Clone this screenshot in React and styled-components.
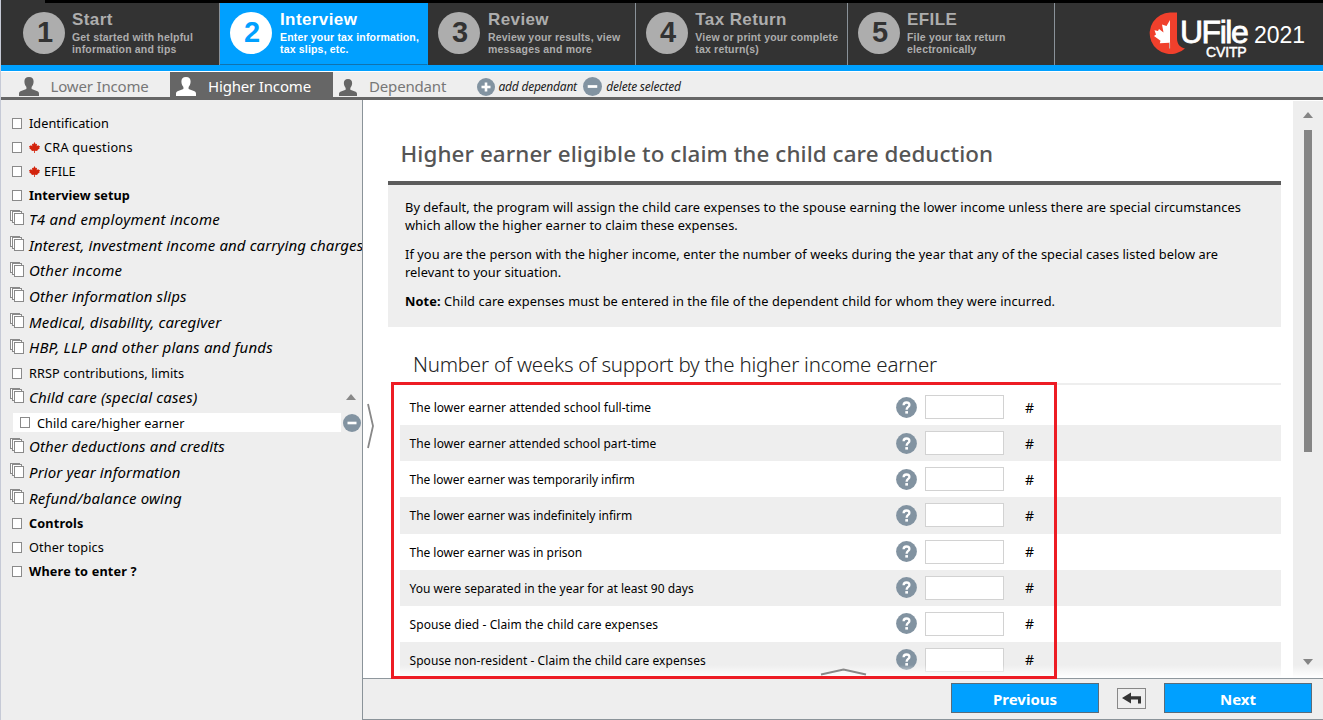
import React from "react";
import styled, { createGlobalStyle, css } from "styled-components";

const sans = `"Noto Sans", "Open Sans", "Liberation Sans", sans-serif`;
const arial = `"Liberation Sans", Arial, sans-serif`;

const Global = createGlobalStyle`
  *, *::before, *::after { box-sizing: border-box; }
  body { margin: 0; background: #fff; font-family: ${sans}; color: #000; overflow: hidden; }
  button, input { font: inherit; }
  p, h1, h2 { margin: 0; }
`;

const Page = styled.div`
  position: relative;
  display: flex;
  flex-direction: column;
  width: 1323px;
  height: 720px;
  overflow: hidden;
  border-left: 1px solid #c6cad6;
`;

/* ---------- header ---------- */

const TopStrip = styled.div`
  flex: none;
  height: 3px;
  background: linear-gradient(to right, #333 44px, #000 44px);
`;

const Header = styled.header`
  flex: none;
  display: flex;
  height: 68px;
  background: #333;
  border-bottom: 6px solid #00a0ff;
`;

const Step = styled.div`
  display: flex;
  width: ${(p) => p.$w}px;
  padding: 9px 0 0 ${(p) => p.$pad}px;
  gap: ${(p) => p.$gap}px;
  white-space: nowrap;
  font-family: ${arial};
  font-weight: 700;
  color: ${(p) => (p.$active ? "#fff" : "#adadad")};
  border-right: 1px solid ${(p) => (p.$active ? "#00a0ff" : "#8a9299")};
  ${(p) => p.$active && css`background: #00a0ff; border-bottom: 1px solid #1173ae;`}
`;

const StepNumber = styled.div`
  flex: none;
  width: 42px;
  height: 42px;
  padding-left: 2px;
  border-radius: 50%;
  background: ${(p) => (p.$active ? "#fff" : "#adadad")};
  color: ${(p) => (p.$active ? "#00a0ff" : "#333")};
  font-size: 29px;
  line-height: 40px;
  text-align: center;
`;

const StepTitle = styled.div`
  font-size: 17px;
  line-height: 18px;
  margin-top: -1px;
  letter-spacing: 0.4px;
`;

const StepText = styled.div`
  margin-top: 2px;
  font-size: 10.5px;
  line-height: 12px;
  letter-spacing: 0.18px;
`;

const Brand = styled.div`
  display: flex;
  margin-left: 94px;
  padding-top: 9px;
  color: #fff;
  font-family: ${arial};
`;

const BrandName = styled.div`
  width: 75px;
  margin-left: -6px;
  padding-top: 4px;
  font-size: 32px;
  line-height: 32px;
  letter-spacing: -1.5px;
  -webkit-text-stroke: 0.8px #fff;
`;

const BrandSub = styled.div`
  margin: -3px 0 0 26px;
  font-size: 14px;
  line-height: 14px;
  letter-spacing: -0.15px;
  -webkit-text-stroke: 0.5px #fff;
`;

const BrandYear = styled.div`
  margin-left: -1px;
  padding-top: 10px;
  font-size: 23px;
  line-height: 26px;
`;

/* ---------- people tabs ---------- */

const TabBar = styled.nav`
  flex: none;
  display: flex;
  height: 29px;
  background: #eee;
  border-top: 1px solid #fff;
  border-bottom: 3px solid #666;
  white-space: nowrap;
`;

const Tab = styled.div`
  display: flex;
  align-items: center;
  width: ${(p) => p.$w}px;
  padding: 4px 0 1px ${(p) => p.$pad}px;
  gap: ${(p) => p.$gap}px;
  font-size: 15px;
  line-height: 22px;
  letter-spacing: -0.17px;
  color: ${(p) => (p.$active ? "#fff" : "#777")};
  background: ${(p) => (p.$active ? "#666" : "transparent")};
  svg { flex: none; align-self: flex-end; fill: ${(p) => (p.$active ? "#fff" : "#666")}; }
`;

const TabAction = styled.div`
  display: flex;
  align-items: center;
  gap: 4px;
  padding-top: 4px;
  margin-right: 6.5px;
  font-size: 12px;
  font-style: italic;
  letter-spacing: -0.23px;
  color: #222;
  svg { flex: none; }
`;

/* ---------- sidebar ---------- */

const Main = styled.div`
  flex: 1;
  display: flex;
  min-height: 0;
`;

const Sidebar = styled.aside`
  flex: none;
  width: 362px;
  padding-top: 11px;
  background: #eee;
  border-right: 1px solid #8a9399;
  overflow: hidden;
`;

const Item = styled.div`
  display: flex;
  align-items: center;
  height: ${(p) => (p.$group ? 25.7 : 24)}px;
  padding-left: ${(p) => (p.$group ? 9 : 11)}px;
  padding-bottom: ${(p) => (p.$group ? 2 : 0)}px;
  gap: ${(p) => (p.$group ? 5 : 7)}px;
  white-space: nowrap;
  font-size: ${(p) => (p.$group ? 15 : 12.7)}px;
  font-style: ${(p) => (p.$group ? "italic" : "normal")};
  font-weight: ${(p) => (p.$bold ? 700 : 400)};
  letter-spacing: ${(p) => p.$ls || 0}px;
  svg { flex: none; }
`;

const Box = styled.span`
  flex: none;
  width: 10px;
  height: 11px;
  border: 1px solid #8a8a8a;
  background: #fff;
`;

const ItemArrow = styled.span`
  margin-left: auto;
  margin-right: 6px;
  border: 5px solid transparent;
  border-top: 0;
  border-bottom: 6px solid #888;
`;

const SubRow = styled.div`
  display: flex;
  align-items: center;
  height: 23.6px;
  padding-left: 12px;
  gap: 2px;
`;

const SubItem = styled.div`
  display: flex;
  align-items: center;
  width: 328px;
  height: 19px;
  padding-left: 7px;
  gap: 7px;
  background: #fff;
  font-size: 12.7px;
  letter-spacing: 0.07px;
  white-space: nowrap;
`;

/* ---------- content ---------- */

const Right = styled.section`
  flex: 1;
  display: flex;
  flex-direction: column;
  min-width: 0;
`;

const ScrollArea = styled.div`
  position: relative;
  flex: 1;
  display: flex;
  min-height: 0;
  padding-top: 1px;
  overflow: hidden;
`;

const Content = styled.div`
  width: 930px;
  padding: 34px 12px 0 25px;
`;

const Title = styled.h1`
  height: 46px;
  padding-left: 12.5px;
  font-size: 22.4px;
  font-weight: 500;
  line-height: 37px;
  letter-spacing: 0.08px;
  color: #555;
  white-space: nowrap;
`;

const Notice = styled.div`
  height: 146px;
  padding: 13px 16px 0 17px;
  border-top: 4px solid #5c5c5c;
  background: #eee;
  font-size: 12.8px;
  line-height: 18px;
  letter-spacing: 0.06px;
  white-space: nowrap;
  p + p { margin-top: 11px; }
`;

const Line = styled.span`
  display: block;
  letter-spacing: ${(p) => p.$ls || 0.06}px;
`;

const Section = styled.h2`
  height: 58px;
  margin-left: 12px;
  padding: 21px 0 0 13px;
  border-bottom: 2px solid #eee;
  font-size: 20.5px;
  font-weight: 300;
  line-height: 32px;
  letter-spacing: -0.23px;
  color: #222;
  white-space: nowrap;
`;

const Rows = styled.div`
  margin: 4px 0 0 12px;
`;

const Row = styled.div`
  display: flex;
  align-items: center;
  height: 36.14px;
  padding-left: 9.5px;
  font-size: 12px;
  background: ${(p) => (p.$shaded ? "#eee" : "#fff")};
  white-space: nowrap;
`;

const RowLabel = styled.label`
  width: 486.5px;
  padding-top: 1px;
  letter-spacing: ${(p) => p.$ls || 0}px;
`;

const Field = styled.input`
  width: 79px;
  height: 24px;
  margin: 0 21px 0 8px;
  padding: 0 4px;
  border: 1px solid #d2d2d2;
  border-radius: 0;
  background: #fff;
`;

const Unit = styled.span`
  font-size: 14px;
`;

const Track = styled.div`
  display: flex;
  flex-direction: column;
  align-items: center;
  width: 30px;
  padding-top: 11px;
  background: #eee;
`;

const Arrow = styled.span`
  width: 10px;
  height: 6px;
  background: #858585;
  clip-path: ${(p) => (p.$down ? "polygon(0 0, 100% 0, 50% 100%)" : "polygon(50% 0, 100% 100%, 0 100%)")};
`;

const Thumb = styled.div`
  width: 8px;
  height: 322px;
  margin: 12px 0 207px;
  background: #858585;
`;

const Fade = styled.div`
  position: absolute;
  inset: auto 0 0 0;
  height: 13px;
  background: linear-gradient(to bottom, rgba(255, 255, 255, 0), #fff);
`;

const Footer = styled.footer`
  flex: none;
  display: flex;
  justify-content: flex-end;
  height: 42px;
  padding: 4px 11px 0 0;
  border-top: 1px solid #8f979d;
  border-bottom: 1px solid #8a9399;
  background: #eee;
`;

const NavButton = styled.button`
  width: 148px;
  height: 30px;
  padding: 2px 0 0;
  border: 1px solid #5a6c7a;
  background: #00a0ff;
  color: #fff;
  font-size: 15px;
  font-weight: 700;
  line-height: 26px;
`;

const BackButton = styled.button`
  display: flex;
  width: 29px;
  height: 21px;
  margin: 5px 18px 0;
  padding: 0;
  border: 1px solid #888;
  background: #eee;
`;

/* ---------- overlays ---------- */

const Highlight = styled.div`
  position: absolute;
  left: 390px;
  top: 382px;
  width: 666px;
  height: 297px;
  border: 3px solid #ed1c24;
`;

const SideHandle = styled.svg`
  position: absolute;
  left: 364px;
  top: 402px;
`;

const BottomHandle = styled.svg`
  position: absolute;
  left: 818px;
  top: 667px;
`;

/* ---------- icons ---------- */

const Person = ({ w = 20, h = 19 }) => (
  <svg width={w} height={h} viewBox="0 0 20 19" preserveAspectRatio="none">
    <path d="M10 0C6.800 0 5.300 1.800 5.400 4.800C5.500 7.500 6.500 8.800 7.400 10V12L1.500 14.300C.4 14.800 0 15.600 0 16.800V19H20V16.800C20 15.600 19.600 14.800 18.500 14.300L12.600 12V10C13.500 8.800 14.500 7.500 14.600 4.800C14.700 1.800 13.200 0 10 0Z" />
  </svg>
);

const RoundIcon = ({ size, plus }) => (
  <svg width={size} height={size} viewBox="0 0 18 18">
    <circle cx="9" cy="9" r="9" fill="#8293a1" />
    <rect x="4.500" y="7.700" width="9" height="2.600" fill="#fff" />
    {plus && <rect x="7.700" y="4.500" width="2.600" height="9" fill="#fff" />}
  </svg>
);

const HelpIcon = () => (
  <svg width="21" height="21" viewBox="0 0 21 21">
    <circle cx="10.500" cy="10.500" r="10.400" fill="#8293a1" />
    <path d="M7.600 8.300C7.600 6.300 8.800 5.500 10.500 5.500C12.300 5.500 13.400 6.400 13.400 7.900C13.400 10 10.600 10 10.600 12.700" fill="none" stroke="#fff" strokeWidth="2.300" />
    <rect x="9.300" y="14.100" width="2.700" height="2.500" fill="#fff" />
  </svg>
);

const StackSvg = styled.svg`
  margin-bottom: 2px;
`;

const Stack = () => (
  <StackSvg width="14" height="15" viewBox="0 0 14 15">
    <g fill="#fff" stroke="#8a8a8a">
      <rect x=".5" y=".5" width="9" height="10" />
      <rect x="2.500" y="1.500" width="9" height="11" />
      <rect x="4.500" y="3.500" width="9" height="11" />
    </g>
  </StackSvg>
);

const LeafSvg = styled.svg`
  margin-right: -3px;
`;

const Leaf = () => (
  <LeafSvg width="11" height="11" viewBox="0 0 22 22">
    <path fill="#d3230c" d="M11 0L13.500 4.500L16 3.500L15.500 8.500L18.500 6L19.500 8L22 8L20.500 11.500L21.500 12.500L16.500 16.500L17 18L11.800 17.500V22H10.200V17.500L5 18L5.500 16.500L.5 12.500L1.500 11.500L0 8L2.500 8L3.500 6L6.500 8.500L6 3.500L8.500 4.500Z" />
  </LeafSvg>
);

const BrandMark = () => (
  <svg width="37" height="42" viewBox="0 0 37 42">
    <path fill="#f0402c" d="M28 0.500H21A21 20.800 0 1 0 36 36.500C31 35.500 28 32 28 26Z" />
    <path fill="#fff" d="M21 8L17.500 14L13 12.500L14.500 20.500L10 17L9 19L5.500 18.300L7 22.500L5 24L11.500 28.800L10.800 31.300L20.300 30.800V31.500H21Z" />
    <rect x="20.200" y="30.500" width="0.900" height="6" fill="#c9c9c9" />
  </svg>
);

/* ---------- data ---------- */

const steps = [
  { title: "Start", text: ["Get started with helpful", "information and tips"], w: 219, pad: 22, gap: 7 },
  { title: "Interview", text: ["Enter your tax information,", "tax slips, etc."], w: 208, pad: 10, gap: 8, active: true },
  { title: "Review", text: ["Review your results, view", "messages and more"], w: 208, pad: 10, gap: 8 },
  { title: "Tax Return", text: ["View or print your complete", "tax return(s)"], w: 212, pad: 10, gap: 7.3 },
  { title: "EFILE", text: ["File your tax return", "electronically"], w: 207, pad: 10, gap: 7 },
];

const items = [
  { label: "Identification", ls: 0.05 },
  { label: "CRA questions", leaf: true, ls: 0.24 },
  { label: "EFILE", leaf: true },
  { label: "Interview setup", bold: true, ls: 0.05 },
  { label: "T4 and employment income", group: true, ls: 0.28 },
  { label: "Interest, investment income and carrying charges", group: true, ls: 0.11 },
  { label: "Other income", group: true, ls: 0.25 },
  { label: "Other information slips", group: true, ls: 0.14 },
  { label: "Medical, disability, caregiver", group: true, ls: 0.14 },
  { label: "HBP, LLP and other plans and funds", group: true, ls: 0.21 },
  { label: "RRSP contributions, limits", ls: 0.1 },
  { label: "Child care (special cases)", group: true, ls: 0.16, child: "Child care/higher earner" },
  { label: "Other deductions and credits", group: true, ls: 0.13 },
  { label: "Prior year information", group: true, ls: 0.12 },
  { label: "Refund/balance owing", group: true, ls: 0.2 },
  { label: "Controls", bold: true, ls: 0.14 },
  { label: "Other topics", ls: 0.12 },
  { label: "Where to enter ?", bold: true, ls: 0.17 },
];

const rows = [
  { label: "The lower earner attended school full-time", ls: 0.04 },
  { label: "The lower earner attended school part-time", ls: 0.03 },
  { label: "The lower earner was temporarily infirm", ls: -0.04 },
  { label: "The lower earner was indefinitely infirm", ls: -0.03 },
  { label: "The lower earner was in prison", ls: -0.03 },
  { label: "You were separated in the year for at least 90 days", ls: 0.01 },
  { label: "Spouse died - Claim the child care expenses", ls: 0.08 },
  { label: "Spouse non-resident - Claim the child care expenses", ls: 0.07 },
];

export default function App() {
  return (
    <Page>
      <Global />
      <TopStrip />
      <Header>
        {steps.map((s, i) => (
          <Step key={s.title} $w={s.w} $pad={s.pad} $gap={s.gap} $active={s.active}>
            <StepNumber $active={s.active}>{i + 1}</StepNumber>
            <div>
              <StepTitle>{s.title}</StepTitle>
              <StepText>
                {s.text[0]}
                <br />
                {s.text[1]}
              </StepText>
            </div>
          </Step>
        ))}
        <Brand>
          <BrandMark />
          <BrandName>
            UFile
            <BrandSub>CVITP</BrandSub>
          </BrandName>
          <BrandYear>2021</BrandYear>
        </Brand>
      </Header>

      <TabBar>
        <Tab $w={169} $pad={18} $gap={11.5}><Person />Lower Income</Tab>
        <Tab $w={163} $pad={6} $gap={12} $active><Person />Higher Income</Tab>
        <Tab $w={143.500} $pad={6} $gap={12}><Person w={18} h={17} />Dependant</Tab>
        <TabAction><RoundIcon size={18} plus />add dependant</TabAction>
        <TabAction><RoundIcon size={19} />delete selected</TabAction>
      </TabBar>

      <Main>
        <Sidebar>
          {items.map((it) => (
            <React.Fragment key={it.label}>
              <Item $group={it.group} $bold={it.bold} $ls={it.ls}>
                {it.group ? <Stack /> : <Box />}
                {it.leaf && <Leaf />}
                {it.label}
                {it.child && <ItemArrow />}
              </Item>
              {it.child && (
                <SubRow>
                  <SubItem><Box />{it.child}</SubItem>
                  <RoundIcon size={18} />
                </SubRow>
              )}
            </React.Fragment>
          ))}
        </Sidebar>

        <Right>
          <ScrollArea>
            <Content>
              <Title>Higher earner eligible to claim the child care deduction</Title>
              <Notice>
                <p>
                  <Line>By default, the program will assign the child care expenses to the spouse earning the lower income unless there are special circumstances</Line>
                  <Line>which allow the higher earner to claim these expenses.</Line>
                </p>
                <p>
                  <Line $ls={0.07}>If you are the person with the higher income, enter the number of weeks during the year that any of the special cases listed below are</Line>
                  <Line>relevant to your situation.</Line>
                </p>
                <p>
                  <Line $ls={0.095}><b>Note:</b> Child care expenses must be entered in the file of the dependent child for whom they were incurred.</Line>
                </p>
              </Notice>
              <Section>Number of weeks of support by the higher income earner</Section>
              <Rows>
                {rows.map((r, i) => (
                  <Row key={r.label} $shaded={i % 2 === 1}>
                    <RowLabel $ls={r.ls}>{r.label}</RowLabel>
                    <HelpIcon />
                    <Field aria-label={r.label} />
                    <Unit>#</Unit>
                  </Row>
                ))}
              </Rows>
            </Content>
            <Track>
              <Arrow />
              <Thumb />
              <Arrow $down />
            </Track>
            <Fade />
          </ScrollArea>
          <Footer>
            <NavButton>Previous</NavButton>
            <BackButton aria-label="Back">
              <svg width="27" height="19" viewBox="0 0 27 19">
                <path fill="#333" d="M4 9L13 3.500V7.200H23V14.500H20V10.500H13V14.500Z" />
              </svg>
            </BackButton>
            <NavButton>Next</NavButton>
          </Footer>
        </Right>
      </Main>

      <SideHandle width="12" height="48" viewBox="0 0 12 48">
        <path d="M3 2L8 24L3 46" fill="none" stroke="#888" strokeWidth="1.800" />
      </SideHandle>
      <Highlight />
      <BottomHandle width="50" height="10" viewBox="0 0 50 10">
        <path d="M2 7.500L24.500 2.500L47 7.500" fill="none" stroke="#888" strokeWidth="1.800" />
      </BottomHandle>
    </Page>
  );
}
